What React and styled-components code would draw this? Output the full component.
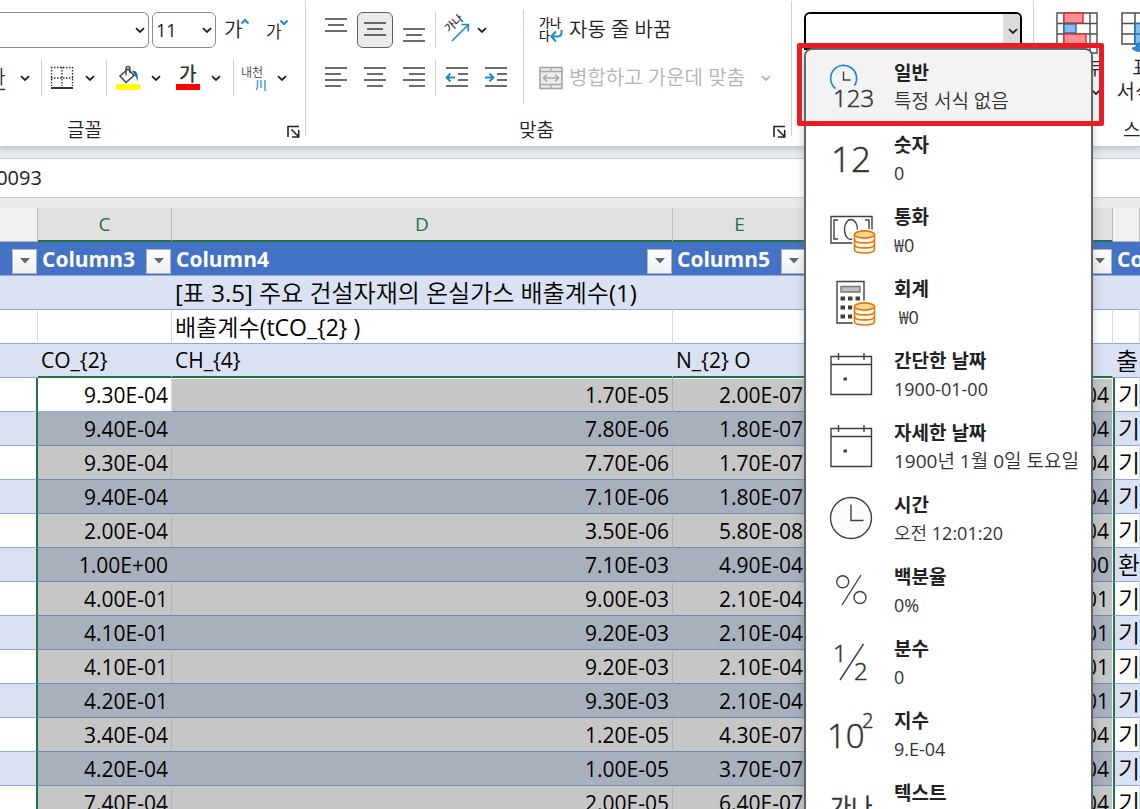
import React from "react";
import styled, { createGlobalStyle, css } from "styled-components";

const bodyFont = `"Open Sans", "Noto Sans CJK KR DemiLight", "Noto Sans CJK KR", sans-serif`;

const GlobalStyle = createGlobalStyle`
  * { box-sizing: border-box; }
  html, body { margin: 0; padding: 0; overflow: hidden; }
  body, button, input, select { font-family: ${bodyFont}; }
  button { border: 0; background: none; padding: 0; margin: 0; color: inherit; }
`;

const Page = styled.div`
  height: 100vh;
  overflow: hidden;
  display: flex;
  flex-direction: column;
  background: #e7ebef;
  color: #222;
`;

/* ---------- ribbon ---------- */

const Ribbon = styled.header`
  position: relative;
  z-index: 2;
  display: flex;
  flex: none;
  height: 147px;
  background: #fff;
  border-bottom: 1px solid #c4c9d0;
  box-shadow: 0 2px 5px rgba(110, 125, 145, 0.35);
`;

const Group = styled.section`
  position: relative;
  display: flex;
  flex-direction: column;
  flex: ${(p) => (p.$grow ? "1 0 auto" : "none")};
  width: ${(p) => (p.$grow ? "auto" : p.$width + "px")};
  padding-top: 12px;

  &::after {
    content: "";
    position: absolute;
    right: 0;
    top: 1px;
    bottom: 10px;
    width: 1px;
    background: #d0d0d0;
  }
`;

const GroupRows = styled.div`
  display: flex;
  height: 100px;
`;

const Rows = styled.div`
  display: flex;
  flex-direction: column;
  gap: 12px;
  padding-left: ${(p) => p.$pad || 0}px;
`;

const ToolRow = styled.div`
  display: flex;
  align-items: center;
  height: 36px;
  gap: ${(p) => p.$gap || 0}px;
`;

const GroupFooter = styled.div`
  display: flex;
  align-items: center;
  justify-content: space-between;
  height: 34px;
  padding: 2px 5px 0 ${(p) => p.$pad}px;
  font-size: 19px;
  line-height: 24px;
`;

const Launcher = styled.button`
  display: flex;
  width: 14px;
  height: 14px;
  margin-top: 4px;
`;

const Separator = styled.span`
  flex: none;
  width: 1px;
  height: 36px;
  background: #d0d0d0;
`;

const TallSeparator = styled.span`
  flex: none;
  width: 1px;
  height: 94px;
  margin: -2px 15px 0 9px;
  background: #d0d0d0;
`;

const ToolButton = styled.button`
  display: flex;
  flex: none;
  align-items: center;
  justify-content: center;
  width: ${(p) => p.$width || 36}px;
  height: 36px;
  border-radius: 6px;
  ${(p) =>
    p.$pressed &&
    css`
      background: #ebebeb;
      border: 1px solid #616161;
    `}
`;

const SplitButton = styled.button`
  display: grid;
  flex: none;
  grid-template-columns: ${(p) => p.$icon || 32}px ${(p) => p.$arrow || 24}px;
  place-items: center;
  height: 36px;

  svg { overflow: visible; }
`;

const ColorPair = styled.div`
  display: flex;
  gap: 4px;
  padding: 0 1px;
`;

const WideButton = styled.button`
  display: flex;
  align-items: center;
  gap: 6px;
  height: 36px;
  font-size: 20px;
  line-height: 24px;
  white-space: nowrap;
  color: ${(p) => (p.disabled ? "#b4b4b4" : "#222")};

  svg:last-child:not(:first-child) { margin-left: 10px; }
`;

const SelectBox = styled.label`
  position: relative;
  display: flex;
  flex: none;
  align-items: center;
  width: ${(p) => p.$width}px;
  height: 36px;
  border: 1px solid #8a8a8a;
  border-left-width: ${(p) => (p.$cut ? 0 : 1)}px;
  border-radius: ${(p) => (p.$cut ? "0 6px 6px 0" : "6px")};

  select {
    appearance: none;
    width: 100%;
    height: 100%;
    padding: 0 3px;
    border: 0;
    background: none;
    font-size: 18px;
    color: #222;
  }
  svg { position: absolute; right: 3px; }
`;

const FormatAnchor = styled.div`
  position: relative;
  margin: 0 12px;
`;

const ComboBox = styled.div`
  display: flex;
  height: 38px;
  border: 2px solid #000;
  border-radius: 6px 6px 0 0;
  overflow: hidden;

  input {
    flex: 1;
    min-width: 0;
    border: 0;
    outline: 0;
    padding: 0 8px;
    font-size: 18px;
  }
  button {
    display: flex;
    align-items: center;
    justify-content: flex-end;
    width: 17px;
    padding-right: 2px;
    background: #dcdcdc;
  }
`;

const FormatMenu = styled.ul`
  position: absolute;
  z-index: 3;
  top: 36px;
  left: 0;
  width: 289px;
  margin: 0;
  padding: 1px 0 8px;
  list-style: none;
  background: #fff;
  border: 2px solid #646464;
  border-radius: 8px;
  box-shadow: 0 2px 10px rgba(70, 80, 95, 0.28);
  overflow: hidden;
`;

const FormatOption = styled.button`
  display: grid;
  grid-template-columns: 42px 1fr;
  gap: 22px;
  width: 100%;
  height: 72px;
  padding-left: 24px;
  text-align: left;
  background: ${(p) => (p.$active ? "#f3f3f3" : "#fff")};
`;

const OptionIcon = styled.span`
  display: flex;
  align-items: center;
  height: 72px;

  svg { flex: none; overflow: visible; }
`;

const OptionText = styled.span`
  display: flex;
  flex-direction: column;
  padding-top: 8px;
  white-space: pre;
`;

const OptionTitle = styled.strong`
  font-family: "Open Sans", "Noto Sans CJK KR", sans-serif;
  font-size: 19px;
  line-height: 28px;
  font-weight: 700;
`;

const OptionSample = styled.span`
  font-size: ${(p) => (p.$korean ? 19 : 18)}px;
  line-height: 28px;
  color: #333;
`;

const Highlight = styled.div`
  position: absolute;
  z-index: 4;
  top: 31px;
  left: -7px;
  width: 307px;
  height: 83px;
  border: 5px solid #ed1c24;
  border-radius: 2px;
  pointer-events: none;
`;

const StyleButtons = styled.div`
  display: flex;
  height: 100px;
  padding-left: 10px;
`;

const StyleButton = styled.button`
  display: flex;
  flex-direction: column;
  flex: none;
  align-items: center;
  width: 65px;
  height: 96px;
  font-size: 20px;
  line-height: 24px;
  white-space: nowrap;

  > svg { flex: none; margin-bottom: 2px; }
`;

const WithArrow = styled.span`
  display: flex;
  align-items: center;
  gap: 3px;
`;

/* ---------- formula bar ---------- */

const FormulaBar = styled.div`
  flex: none;
  height: 40px;
  margin: 11px 0 10px;
  overflow: hidden;
  background: #fff;
  border-top: 1px solid #c9cdd1;
  border-bottom: 1px solid #c9cdd1;

  input {
    display: block;
    width: 100%;
    height: 36px;
    margin-left: -32px;
    padding: 0;
    border: 0;
    outline: 0;
    background: none;
    font-size: 20px;
    color: #222;
  }
`;

/* ---------- sheet ---------- */

const Sheet = styled.table`
  flex: none;
  width: 100%;
  table-layout: fixed;
  border-collapse: separate;
  border-spacing: 0;
  font-size: 21px;
  color: #000;
  background: #fff;

  td, th {
    height: 34px;
    padding: 0 3px;
    line-height: 30px;
    white-space: nowrap;
    text-align: left;
    overflow: hidden;
  }
`;

const Letter = styled.th`
  && {
    padding: 0;
    text-align: center;
    font-size: 19px;
    font-weight: 400;
    color: #217346;
    background: ${(p) => (p.$selected ? "#e1e1e1" : "#f0f0f0")};
    border-bottom: ${(p) => (p.$selected ? "2px solid #217346" : "1px solid #b0b0b0")};
    border-right: 1px solid #bdbdbd;
  }
`;

const HeadCell = styled.th`
  && {
    background: #4472c4;
    color: #fff;
    font-weight: 700;
    border-bottom: 1px solid #8ea9db;
    padding: 0 1px 0 4px;
  }
`;

const HeadInner = styled.span`
  display: flex;
  align-items: center;
  justify-content: space-between;
  gap: 4px;
  height: 33px;
`;

const FilterButton = styled.button`
  display: flex;
  flex: none;
  align-items: center;
  justify-content: center;
  width: 25px;
  height: 25px;
  margin: 5px 0 0 auto;
  background: linear-gradient(#fff, #edf0f4);
  border: 1px solid #aeb4bd;
`;

const Cell = styled.td`
  && {
    text-align: ${(p) => (p.$number ? "right" : "left")};
    font-size: ${(p) => p.$size || 21}px;
    background: ${(p) =>
      p.$selected ? (p.$band ? "#a8b0be" : "#c6c6c6") : p.$band ? "#d9e1f2" : "#fff"};
    border-bottom: 1px solid ${(p) => (p.$selected ? "#7089b4" : "#8ea9db")};
    border-right: 1px solid
      ${(p) => (p.$band ? "transparent" : p.$selected ? "#b1b1b1" : "#d9d9d9")};
    ${(p) => p.$edge === "bottom" && "border-bottom: 2px solid #217346;"}
    ${(p) => p.$edge === "left" && "border-right: 2px solid #217346;"}
    ${(p) => p.$edge === "inner" && "border-right: 1px solid #fff;"}
    ${(p) => p.$edge === "right" && "border-left: 2px solid #217346;"}
    ${(p) => p.$firstRow && "box-shadow: inset 0 1px #fff;"}
  }
`;

/* ---------- small icons ---------- */

const Chevron = ({ color = "#222" }) => (
  <svg width="10" height="7" viewBox="0 0 10 7" fill="none" stroke={color} strokeWidth="1.8" aria-hidden="true">
    <path d="M1 1.200 5 5l4-3.800" />
  </svg>
);

const LauncherIcon = () => (
  <svg width="14" height="14" viewBox="0 0 14 14" fill="none" stroke="#222" aria-hidden="true">
    <path d="M1 12V1.500H12" strokeWidth="1.600" />
    <path d="M4.500 4.500 11 11M11.700 5v7H5" strokeWidth="1.600" />
  </svg>
);

/* Each line is [x1, x2, y] on a 24px square */
const Lines = ({ lines, children }) => (
  <svg width="24" height="24" viewBox="0 0 24 24" fill="none" aria-hidden="true">
    {lines.map(([a, b, y]) => (
      <path key={y} d={`M${a} ${y}H${b}`} stroke="#3b3b3b" strokeWidth="1.500" />
    ))}
    {children}
  </svg>
);

const GlyphIcon = ({ up }) => (
  <svg width="30" height="30" viewBox="0 0 30 30" aria-hidden="true">
    <text x={up ? 2 : 5} y={up ? 22 : 23} fontSize={up ? 20 : 17} fill="#222">가</text>
    <path
      d={up ? "M19.500 8.500 23 5l3.500 3.500" : "M19.500 5.500 23 9l3.500-3.500"}
      fill="none"
      stroke="#1e8bcd"
      strokeWidth="2"
    />
  </svg>
);

const BordersIcon = () => (
  <svg width="24" height="24" viewBox="0 0 24 24" fill="none" aria-hidden="true">
    <path d="M1.500 1V20M12 1V20M22.500 1V20M1 1.500H23M1 12H23" stroke="#333" strokeWidth="1.400" strokeDasharray="1.500 1.500" />
    <path d="M1 22H23" stroke="#000" strokeWidth="1.600" />
  </svg>
);

const FillIcon = () => (
  <svg width="26" height="26" viewBox="0 0 26 26" fill="none" aria-hidden="true">
    <path d="M5 11 13 4l6 6.500-8 7z" stroke="#444" strokeWidth="1.500" />
    <path d="M11 10.500V4c0-3.500 4-3.500 4 0V8" stroke="#444" strokeWidth="1.400" />
    <path d="M17 6c5-1 6.500 4 5.500 10.500-1.200-4-2-6-5.500-10.500z" fill="#1469ad" />
    <rect x="1" y="19" width="24" height="6" fill="#ff0" />
  </svg>
);

const FontColorIcon = () => (
  <svg width="26" height="26" viewBox="0 0 26 26" aria-hidden="true">
    <text x="4" y="16" fontSize="19" fontFamily="Noto Sans CJK KR" fontWeight="500" fill="#333">가</text>
    <rect x="1" y="19" width="24" height="6" fill="#f00" />
  </svg>
);

const PhoneticIcon = () => (
  <svg width="26" height="28" viewBox="0 0 26 28" aria-hidden="true">
    <text x="0" y="13" fontSize="12" fill="#444">내천</text>
    <path d="M16.500 16v6q0 3-1.500 4M20 16v8M24 16v11" fill="none" stroke="#4a9fd8" strokeWidth="1.500" />
  </svg>
);

const OrientationIcon = () => (
  <svg width="28" height="28" viewBox="0 0 28 28" aria-hidden="true">
    <text x="0" y="0" fontSize="11" fontFamily="Noto Sans CJK KR" fontWeight="500" fill="#333" transform="translate(6 17) rotate(-42)">가나</text>
    <path d="M9 25 25 9M18.500 8.500H25.300V15.500" fill="none" stroke="#1e8bcd" strokeWidth="1.700" />
  </svg>
);

const WrapIcon = () => (
  <svg width="24" height="26" viewBox="0 0 24 26" aria-hidden="true">
    <g fontSize="12" fontFamily="Noto Sans CJK KR" fontWeight="500" fill="#222">
      <text x="0" y="11">가나</text>
      <text x="0" y="24">다</text>
    </g>
    <path d="M22.500 13v2.500q0 4-4 4H13M17 14.500 12.300 19.500 17 24.500" fill="none" stroke="#1e8bcd" strokeWidth="2" />
  </svg>
);

const MergeIcon = () => (
  <svg width="24" height="24" viewBox="0 0 24 24" fill="none" stroke="#a6a6a6" aria-hidden="true">
    <rect x="1" y="1.500" width="22" height="21" fill="#ededed" strokeWidth="1.600" />
    <path d="M1 5.500H23M1 18.500H23M12 1.500v4M12 18.500v4" strokeWidth="1.300" />
    <path d="M4.500 12H19.500M8 8.500 4.500 12 8 15.500M16 8.500l3.500 3.500-3.500 3.500" strokeWidth="1.500" />
  </svg>
);

const ConditionalIcon = () => (
  <svg width="42" height="42" viewBox="0 0 42 42" aria-hidden="true">
    <path d="M1 1H41V41H1zM1 11.500H41M1 22H41M1 32.500H41M8 1V41M34 1V41" fill="#fff" stroke="#4d4d4d" strokeWidth="1.400" />
    <rect x="8" y="1" width="19" height="10" fill="#ff8f96" stroke="#d92b20" strokeWidth="1.400" />
    <rect x="8" y="12" width="12" height="9" fill="#83bdeb" stroke="#1c6fb8" strokeWidth="1.400" />
    <rect x="8" y="22" width="22" height="10" fill="#ff8f96" stroke="#d92b20" strokeWidth="1.400" />
  </svg>
);

const TableStyleIcon = () => (
  <svg width="42" height="42" viewBox="0 0 42 42" aria-hidden="true">
    <path d="M1 1H41V32H1zM1 11.500H41M1 22H41M14 1V32M28 1V32" fill="#fff" stroke="#4d4d4d" strokeWidth="1.500" />
    <path d="M14 11.500H41V32H14zM14 22H41" fill="#83bdeb" stroke="#1c6fb8" strokeWidth="1.500" />
    <path d="M11 36c4 0 5-4 8-6l5 5c-2 5-9 6-13 1z" fill="#2e8bd0" stroke="#1c6fb8" />
  </svg>
);

/* ---------- number format icons ---------- */

const Coins = () => (
  <g stroke="#e2770c" strokeWidth="1.600">
    <path d="M25.500 26v15.500c0 4.500 20 4.500 20 0V26c0-4-20-4-20 0z" fill="#fff" stroke="#fff" strokeWidth="4.500" />
    <path d="M25.500 26.500v15c0 4.700 20 4.700 20 0v-15" fill="#fdf6ea" />
    <path d="M25.500 31.500c0 4.500 20 4.500 20 0M25.500 36.500c0 4.500 20 4.500 20 0" />
    <ellipse cx="35.500" cy="26.500" rx="10" ry="3.600" fill="#fbd68c" />
  </g>
);

const Drawing = ({ children }) => (
  <svg width="46" height="44" viewBox="1 1 46 44" fill="none" stroke="#404040" strokeWidth="1.400" aria-hidden="true">
    {children}
  </svg>
);

const Numeral = ({ x, y, size, children }) => (
  <text x={x} y={y} fontSize={size} fontWeight="300" fill="#333" stroke="#333" strokeWidth="0.500">{children}</text>
);

const icons = {
  general: (
    <Drawing>
      <path d="M6.500 24.500A13 13 0 1 1 25.500 21.500" stroke="#1e8bcd" strokeWidth="1.700" />
      <path d="M14.500 7.500v8.500h7" />
      <Numeral x={4} y={43} size={24}>123</Numeral>
    </Drawing>
  ),
  number: (
    <Drawing>
      <Numeral x={2} y={36} size={35}>12</Numeral>
    </Drawing>
  ),
  currency: (
    <Drawing>
      <path d="M2 8.500H43V35H2z" />
      <path d="M9 12H5V31H9M36 12h4V23" />
      <ellipse cx="22" cy="21.500" rx="6.500" ry="10" />
      <Coins />
    </Drawing>
  ),
  accounting: (
    <Drawing>
      <path d="M8 1.500H35V43H8z" />
      <path d="M12 6.500H31V12H12z" fill="#bdbdbd" stroke="#777" />
      <path d="M11.500 18.500h4.500M19 18.500h4.500M26.500 18.500h4.500M11.500 27.500h4.500M19 27.500h4.500M11.500 36.500h4.500M19 36.500h4.500" strokeWidth="4.200" />
      <Coins />
    </Drawing>
  ),
  calendar: (
    <Drawing>
      <path d="M2 4.500H42.500V42.500H2zM2 12.500H42.500M9.500 1V8M35 1V8" />
      <path d="M14.500 27h3.500" strokeWidth="3" />
    </Drawing>
  ),
  clock: (
    <Drawing>
      <circle cx="22" cy="22" r="20.500" fill="#fafcfb" />
      <path d="M22 8.500V24.500H34.500" />
    </Drawing>
  ),
  percent: (
    <Drawing>
      <circle cx="13.700" cy="13.700" r="6" />
      <circle cx="31" cy="29.500" r="6" />
      <path d="M32 7 13 37" />
    </Drawing>
  ),
  fraction: (
    <Drawing>
      <Numeral x={4} y={22} size={24}>1</Numeral>
      <Numeral x={25} y={40} size={24}>2</Numeral>
      <path d="M34.500 4 11 40" />
    </Drawing>
  ),
  exponent: (
    <Drawing>
      <Numeral x={-2} y={36} size={33}>10</Numeral>
      <Numeral x={33} y={16} size={20}>2</Numeral>
    </Drawing>
  ),
  text: (
    <Drawing>
      <Numeral x={1} y={31} size={23}>가나</Numeral>
    </Drawing>
  ),
};

const formats = [
  { icon: "general", title: "일반", sample: "특정 서식 없음", korean: true },
  { icon: "number", title: "숫자", sample: "0" },
  { icon: "currency", title: "통화", sample: "₩0" },
  { icon: "accounting", title: "회계", sample: " ₩0" },
  { icon: "calendar", title: "간단한 날짜", sample: "1900-01-00" },
  { icon: "calendar", title: "자세한 날짜", sample: "1900년 1월 0일 토요일", korean: true },
  { icon: "clock", title: "시간", sample: "오전 12:01:20" },
  { icon: "percent", title: "백분율", sample: "0%" },
  { icon: "fraction", title: "분수", sample: "0" },
  { icon: "exponent", title: "지수", sample: "9.E-04" },
  { icon: "text", title: "텍스트", sample: "0.00093" },
];

const data = [
  ["9.30E-04", "1.70E-05", "2.00E-07", "기"],
  ["9.40E-04", "7.80E-06", "1.80E-07", "기"],
  ["9.30E-04", "7.70E-06", "1.70E-07", "기"],
  ["9.40E-04", "7.10E-06", "1.80E-07", "기"],
  ["2.00E-04", "3.50E-06", "5.80E-08", "기"],
  ["1.00E+00", "7.10E-03", "4.90E-04", "환"],
  ["4.00E-01", "9.00E-03", "2.10E-04", "기"],
  ["4.10E-01", "9.20E-03", "2.10E-04", "기"],
  ["4.10E-01", "9.20E-03", "2.10E-04", "기"],
  ["4.20E-01", "9.30E-03", "2.10E-04", "기"],
  ["3.40E-04", "1.20E-05", "4.30E-07", "기"],
  ["4.20E-04", "1.00E-05", "3.70E-07", "기"],
  ["7.40E-04", "2.00E-05", "6.40E-07", "기"],
];

const Filter = ({ label }) => (
  <FilterButton aria-label={label}>
    <svg width="10" height="6" viewBox="0 0 10 6" aria-hidden="true">
      <path d="M0 0H10L5 5.500z" fill="#666" />
    </svg>
  </FilterButton>
);

const FontGroup = () => (
  <Group $width={306} aria-label="글꼴">
    <GroupRows>
      <Rows>
        <ToolRow $gap={3}>
          <SelectBox $width={149} $cut>
            <select aria-label="글꼴 이름" defaultValue=""><option value=""></option></select>
            <Chevron />
          </SelectBox>
          <SelectBox $width={64}>
            <select aria-label="글꼴 크기" defaultValue="11"><option>11</option></select>
            <Chevron />
          </SelectBox>
          <ToolButton aria-label="글꼴 크기 크게"><GlyphIcon up /></ToolButton>
          <ToolButton aria-label="글꼴 크기 작게"><GlyphIcon /></ToolButton>
        </ToolRow>
        <ToolRow $gap={4}>
          <SplitButton $icon={12} $arrow={25} aria-label="밑줄">
            <svg width="12" height="26" viewBox="0 0 12 26" aria-hidden="true">
              <text x="-12" y="19" fontSize="19" fill="#333">가</text>
              <path d="M0 24.500H5" stroke="#333" strokeWidth="1.500" />
            </svg>
            <Chevron />
          </SplitButton>
          <Separator />
          <SplitButton aria-label="테두리"><BordersIcon /><Chevron /></SplitButton>
          <Separator />
          <ColorPair>
            <SplitButton aria-label="채우기 색"><FillIcon /><Chevron /></SplitButton>
            <SplitButton aria-label="글꼴 색"><FontColorIcon /><Chevron /></SplitButton>
          </ColorPair>
          <Separator />
          <SplitButton aria-label="윗주 필드"><PhoneticIcon /><Chevron /></SplitButton>
        </ToolRow>
      </Rows>
    </GroupRows>
    <GroupFooter $pad={67}>
      <span>글꼴</span>
      <Launcher aria-label="글꼴 설정"><LauncherIcon /></Launcher>
    </GroupFooter>
  </Group>
);

const AlignGroup = () => (
  <Group $width={486} aria-label="맞춤">
    <GroupRows>
      <Rows $pad={12}>
        <ToolRow $gap={3}>
          <ToolButton aria-label="위쪽 맞춤"><Lines lines={[[1, 23, 1], [4, 20, 7], [1, 23, 13]]} /></ToolButton>
          <ToolButton $pressed aria-label="가운데 맞춤"><Lines lines={[[1, 23, 5], [4, 20, 11], [1, 23, 17]]} /></ToolButton>
          <ToolButton aria-label="아래쪽 맞춤"><Lines lines={[[1, 23, 11], [4, 20, 17], [1, 23, 23]]} /></ToolButton>
          <Separator />
          <SplitButton $icon={36} $arrow={14} aria-label="방향"><OrientationIcon /><Chevron /></SplitButton>
        </ToolRow>
        <ToolRow $gap={3}>
          <ToolButton aria-label="왼쪽 맞춤"><Lines lines={[[1, 23, 2], [1, 17, 8], [1, 23, 14], [1, 17, 20]]} /></ToolButton>
          <ToolButton aria-label="가로 가운데 맞춤"><Lines lines={[[1, 23, 2], [4, 20, 8], [1, 23, 14], [4, 20, 20]]} /></ToolButton>
          <ToolButton aria-label="오른쪽 맞춤"><Lines lines={[[1, 23, 2], [7, 23, 8], [1, 23, 14], [7, 23, 20]]} /></ToolButton>
          <Separator />
          <ToolButton aria-label="내어쓰기">
            <Lines lines={[[1, 23, 2], [13, 23, 8], [13, 23, 14], [1, 23, 20]]}>
              <path d="M1.500 11.500H10M5.500 7.500l-4 4 4 4" stroke="#1e8bcd" strokeWidth="1.900" />
            </Lines>
          </ToolButton>
          <ToolButton aria-label="들여쓰기">
            <Lines lines={[[1, 23, 2], [13, 23, 8], [13, 23, 14], [1, 23, 20]]}>
              <path d="M1 11.500H9.500M5.500 7.500l4 4-4 4" stroke="#1e8bcd" strokeWidth="1.900" />
            </Lines>
          </ToolButton>
        </ToolRow>
      </Rows>
      <TallSeparator />
      <Rows>
        <WideButton><WrapIcon />자동 줄 바꿈</WideButton>
        <WideButton disabled><MergeIcon />병합하고 가운데 맞춤<Chevron color="#b4b4b4" /></WideButton>
      </Rows>
    </GroupRows>
    <GroupFooter $pad={213}>
      <span>맞춤</span>
      <Launcher aria-label="맞춤 설정"><LauncherIcon /></Launcher>
    </GroupFooter>
  </Group>
);

const NumberGroup = () => (
  <Group $width={242} aria-label="표시 형식">
    <FormatAnchor>
      <ComboBox>
        <input aria-label="표시 형식" role="combobox" aria-expanded="true" aria-controls="formats" defaultValue="" />
        <button aria-label="표시 형식 열기"><Chevron /></button>
      </ComboBox>
      <FormatMenu id="formats">
        {formats.map((f, i) => (
          <li key={f.title}>
            <FormatOption $active={i === 0}>
              <OptionIcon>{icons[f.icon]}</OptionIcon>
              <OptionText>
                <OptionTitle>{f.title}</OptionTitle>
                <OptionSample $korean={f.korean}>{f.sample}</OptionSample>
              </OptionText>
            </FormatOption>
          </li>
        ))}
      </FormatMenu>
      <Highlight />
    </FormatAnchor>
  </Group>
);

const StylesGroup = () => (
  <Group $grow aria-label="스타일">
    <StyleButtons>
      <StyleButton><ConditionalIcon /><span>조건부</span><WithArrow>서식 <Chevron /></WithArrow></StyleButton>
      <StyleButton><TableStyleIcon /><span>표</span><WithArrow>서식 <Chevron /></WithArrow></StyleButton>
    </StyleButtons>
    <GroupFooter $pad={89}><span>스타일</span></GroupFooter>
  </Group>
);

export default function App() {
  return (
    <Page>
      <GlobalStyle />
      <Ribbon>
        <FontGroup />
        <AlignGroup />
        <NumberGroup />
        <StylesGroup />
      </Ribbon>
      <FormulaBar>
        <input aria-label="수식 입력줄" defaultValue="0.00093" />
      </FormulaBar>
      <Sheet>
        <colgroup>
          <col style={{ width: 38 }} />
          <col style={{ width: 134 }} />
          <col style={{ width: 501 }} />
          <col style={{ width: 134 }} />
          <col style={{ width: 306 }} />
          <col />
        </colgroup>
        <thead>
          <tr>
            <Letter />
            <Letter $selected>C</Letter>
            <Letter $selected>D</Letter>
            <Letter $selected>E</Letter>
            <Letter $selected />
            <Letter />
          </tr>
          <tr>
            {["", "Column3", "Column4", "Column5", ""].map((name, i) => (
              <HeadCell key={i}>
                <HeadInner>{name}<Filter label={`필터 ${name}`} /></HeadInner>
              </HeadCell>
            ))}
            <HeadCell>Column7</HeadCell>
          </tr>
        </thead>
        <tbody>
          <tr>
            <Cell $band /><Cell $band />
            <Cell $band $size={24}>[표 3.5] 주요 건설자재의 온실가스 배출계수(1)</Cell>
            <Cell $band /><Cell $band /><Cell $band />
          </tr>
          <tr>
            <Cell /><Cell />
            <Cell $size={23}>배출계수(tCO_{"{2}"} )</Cell>
            <Cell /><Cell /><Cell />
          </tr>
          <tr>
            <Cell $band />
            <Cell $band $edge="bottom">CO_{"{2}"}</Cell>
            <Cell $band $edge="bottom">CH_{"{4}"}</Cell>
            <Cell $band $edge="bottom">N_{"{2}"} O</Cell>
            <Cell $band $edge="bottom" />
            <Cell $band $size={24}>출</Cell>
          </tr>
          {data.map(([c, d, e, h], i) => {
            const band = i % 2 === 1;
            return (
              <tr key={i}>
                <Cell $band={band} $edge="left" />
                <Cell $number $selected={i > 0} $band={band}>{c}</Cell>
                <Cell $number $selected $band={band} $firstRow={i === 0}>{d}</Cell>
                <Cell $number $selected $band={band} $firstRow={i === 0}>{e}</Cell>
                <Cell $number $selected $band={band} $edge="inner" $firstRow={i === 0}>{c}</Cell>
                <Cell $band={band} $edge="right" $size={24}>{h}</Cell>
              </tr>
            );
          })}
        </tbody>
      </Sheet>
    </Page>
  );
}
